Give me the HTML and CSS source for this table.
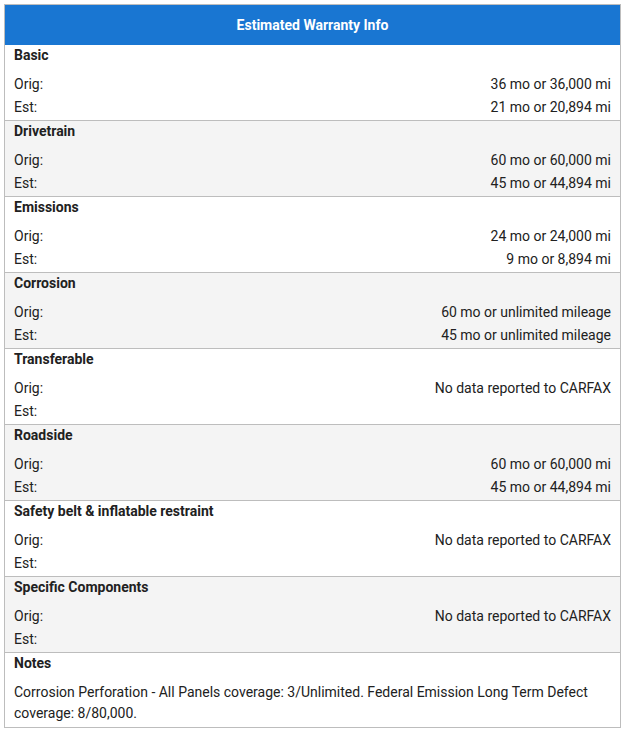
FILE: index.html
```html
<!DOCTYPE html>
<html>
<head>
<meta charset="utf-8">
<link rel="stylesheet" href="styles.css">
</head>
<body>
<div class="card">
  <div class="head">Estimated Warranty Info</div>

  <div class="sec">
    <div class="title">Basic</div>
    <div class="rows">
      <div class="row"><span>Orig:</span><span>36 mo or 36,000 mi</span></div>
      <div class="row"><span>Est:</span><span>21 mo or 20,894 mi</span></div>
    </div>
  </div>

  <div class="sec alt">
    <div class="title">Drivetrain</div>
    <div class="rows">
      <div class="row"><span>Orig:</span><span>60 mo or 60,000 mi</span></div>
      <div class="row"><span>Est:</span><span>45 mo or 44,894 mi</span></div>
    </div>
  </div>

  <div class="sec">
    <div class="title">Emissions</div>
    <div class="rows">
      <div class="row"><span>Orig:</span><span>24 mo or 24,000 mi</span></div>
      <div class="row"><span>Est:</span><span>9 mo or 8,894 mi</span></div>
    </div>
  </div>

  <div class="sec alt">
    <div class="title">Corrosion</div>
    <div class="rows">
      <div class="row"><span>Orig:</span><span>60 mo or unlimited mileage</span></div>
      <div class="row"><span>Est:</span><span>45 mo or unlimited mileage</span></div>
    </div>
  </div>

  <div class="sec">
    <div class="title">Transferable</div>
    <div class="rows">
      <div class="row"><span>Orig:</span><span>No data reported to CARFAX</span></div>
      <div class="row"><span>Est:</span><span></span></div>
    </div>
  </div>

  <div class="sec alt">
    <div class="title">Roadside</div>
    <div class="rows">
      <div class="row"><span>Orig:</span><span>60 mo or 60,000 mi</span></div>
      <div class="row"><span>Est:</span><span>45 mo or 44,894 mi</span></div>
    </div>
  </div>

  <div class="sec">
    <div class="title">Safety belt &amp; inflatable restraint</div>
    <div class="rows">
      <div class="row"><span>Orig:</span><span>No data reported to CARFAX</span></div>
      <div class="row"><span>Est:</span><span></span></div>
    </div>
  </div>

  <div class="sec alt">
    <div class="title">Specific Components</div>
    <div class="rows">
      <div class="row"><span>Orig:</span><span>No data reported to CARFAX</span></div>
      <div class="row"><span>Est:</span><span></span></div>
    </div>
  </div>

  <div class="sec notes">
    <div class="title">Notes</div>
    <p class="note">Corrosion Perforation - All Panels coverage: 3/Unlimited. Federal Emission Long Term Defect coverage: 8/80,000.</p>
  </div>
</div>
</body>
</html>
```

FILE: styles.css
```css
html, body {
  margin: 0;
  padding: 0;
  background: #fff;
}
body {
  font-family: Roboto, "Liberation Sans", sans-serif;
  font-size: 14px;
  color: #212121;
}
.card {
  margin: 4px;
  width: 617px;
  box-sizing: border-box;
  border: 1px solid #bdbdbd;
}
.head {
  height: 40px;
  background: #1976d2;
  color: #fff;
  font-weight: 700;
  font-size: 14px;
  display: flex;
  align-items: center;
  justify-content: center;
}
.sec {
  padding: 0 9px 1px 9px;
  border-top: 1px solid #bdbdbd;
  background: #fff;
}
.sec:nth-child(2) {
  border-top: none;
}
.sec.alt {
  background: #f4f4f4;
}
.title {
  font-weight: 700;
  line-height: 20px;
}
.rows {
  margin-top: 8px;
}
.row {
  display: flex;
  justify-content: space-between;
  line-height: 23px;
}
.note {
  margin: 9px 0 0 0;
  line-height: 21px;
  padding-bottom: 2px;
}
```
